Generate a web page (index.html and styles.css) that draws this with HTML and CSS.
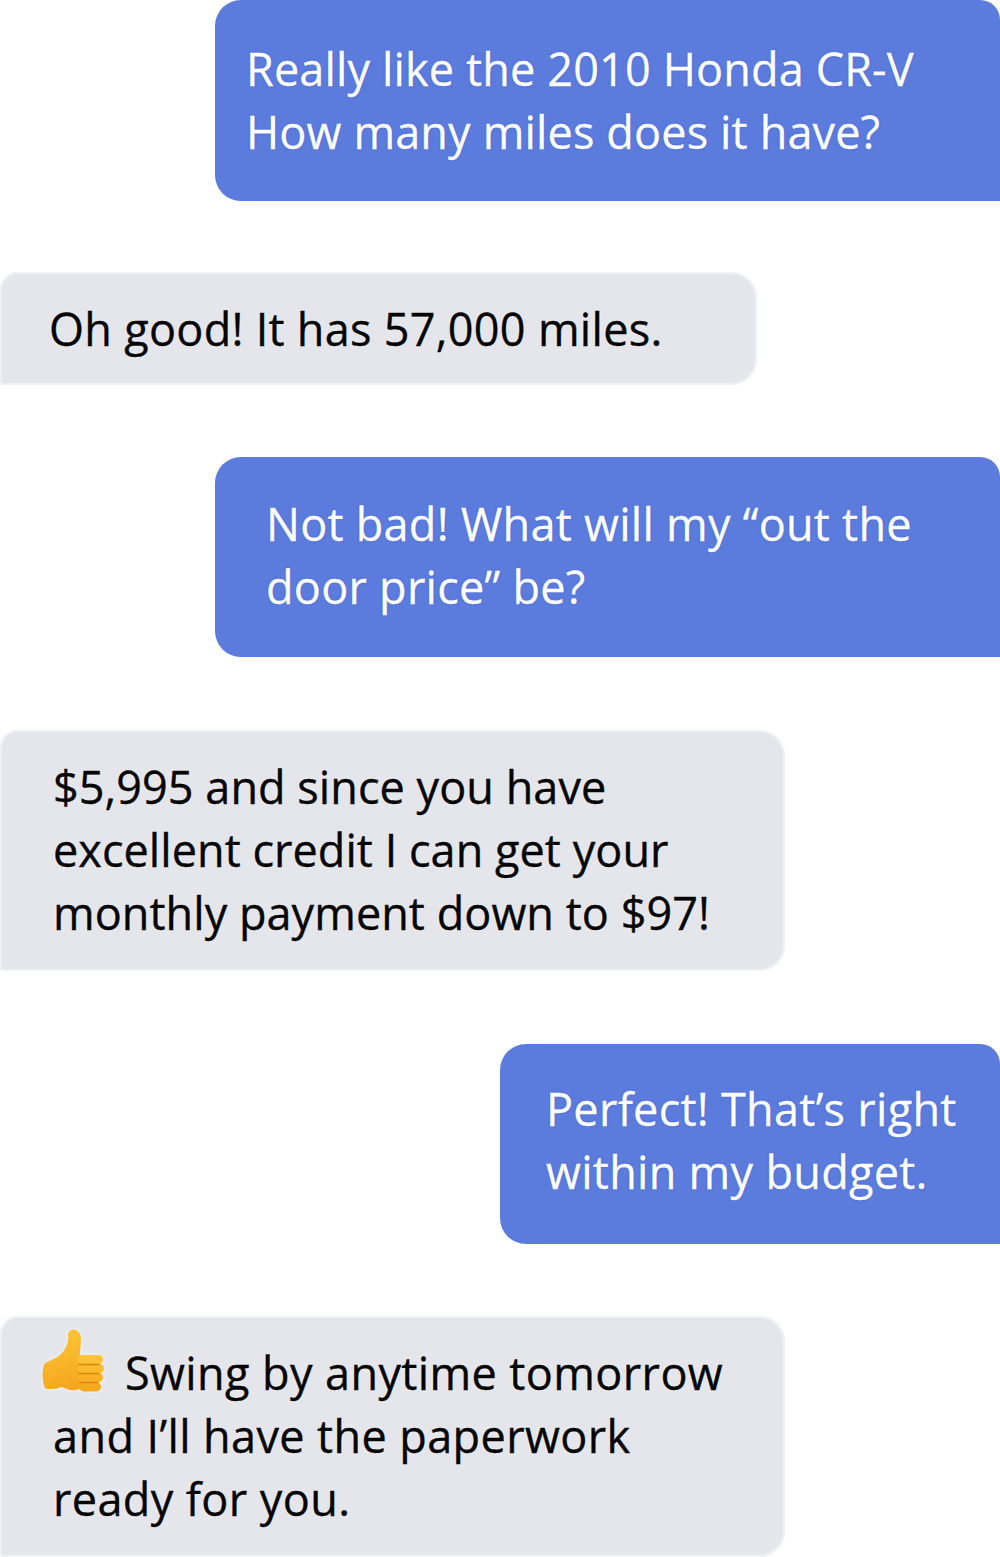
FILE: index.html
```html
<!DOCTYPE html>
<html lang="en">
<head>
<meta charset="utf-8">
<title>Chat</title>
<link rel="stylesheet" href="styles.css">
</head>
<body>
<main class="chat">
  <div class="bubble out b1"><p>Really like the 2010 Honda CR-V<br>How many miles does it have?</p></div>
  <div class="bubble in b2"><p>Oh good! It has 57,000 miles.</p></div>
  <div class="bubble out b3"><p>Not bad! What will my “out the<br>door price” be?</p></div>
  <div class="bubble in b4"><p>$5,995 and since you have<br>excellent credit I can get your<br>monthly payment down to $97!</p></div>
  <div class="bubble out b5"><p>Perfect! That’s right<br>within my budget.</p></div>
  <div class="bubble in b6">
    <svg class="thumb" viewBox="0 0 63 66" aria-hidden="true">
      <defs>
        <linearGradient id="hand" x1="0" y1="0" x2="0.2" y2="1">
          <stop offset="0" stop-color="#ffc93a"/>
          <stop offset="1" stop-color="#f5a81e"/>
        </linearGradient>
      </defs>
      <path d="M2 36C8 32 16 30 21 24C25 18 27 12 26 7C26 3 29 1 32 1.500C36 2 39 6 39 11C39 16 38 21 38 27L40 60C32 64 26 62 20 59C14 61 6 62 3 60C0 52 0 44 2 36Z" fill="url(#hand)"/>
      <rect x="35" y="27" width="26" height="9" rx="4.500" fill="#fdc233"/>
      <rect x="36" y="36" width="26" height="9" rx="4.500" fill="#fcbb2d"/>
      <rect x="36" y="45" width="25" height="9" rx="4.500" fill="#f9b226"/>
      <rect x="37" y="54" width="22" height="9.500" rx="4.700" fill="#f5a91f"/>
      <path d="M37 36.500h20M37 45.500h20M38 54.500h18" stroke="#d5860f" stroke-width="1.300" stroke-linecap="round" fill="none"/>
    </svg>
    <p>Swing by anytime tomorrow<br>and I’ll have the paperwork<br>ready for you.</p></div>
</main>
</body>
</html>
```
FILE: styles.css
```css
html, body { margin: 0; padding: 0; background: #fff; }
body { font-family: "Open Sans", "Noto Sans", sans-serif; }
.chat { width: 1000px; height: 1557px; overflow: hidden; display: flex; flex-direction: column; }
.bubble { box-sizing: border-box; font-size: 45px; line-height: 63px; letter-spacing: 0.2px; position: relative; }
.bubble p { margin: 0; white-space: nowrap; position: relative; }
.out { background: #5b7bdd; color: #fff; align-self: flex-end; border-radius: 26px 20px 0 26px; -webkit-text-stroke: 0.3px #fff; text-shadow: 0 0 2px #3f5fcf; }
.in { background: #e5e6eb; color: #050505; align-self: flex-start; border-radius: 18px 26px 26px 0; box-shadow: inset 0 0 0 2px #f0f1f4; -webkit-text-stroke: 0.4px #050505; text-shadow: 0 0 2px #fff; }
.b1 { width: 785px; height: 201px; padding: 37px 0 0 31px; letter-spacing: 0.15px; }
.b2 { width: 757px; height: 114px; margin-top: 71px; padding: 25px 0 0 49px; letter-spacing: 0.3px; }
.b3 { width: 785px; height: 200px; margin-top: 72px; padding: 35px 0 0 51px; letter-spacing: 0.27px; }
.b4 { width: 785px; height: 242px; margin-top: 73px; padding: 25px 0 0 53px; letter-spacing: 0.05px; }
.b5 { width: 500px; height: 200px; margin-top: 73px; padding: 33px 0 0 46px; letter-spacing: 0.3px; }
.b6 { width: 785px; height: 242px; margin-top: 72px; padding: 25px 0 0 53px; letter-spacing: 0.4px; }
.b6 p { text-indent: 72px; }
.thumb { position: absolute; left: 42px; top: 12px; width: 63px; height: 66px; filter: drop-shadow(0 0 2px #f4f6ff); }
```
